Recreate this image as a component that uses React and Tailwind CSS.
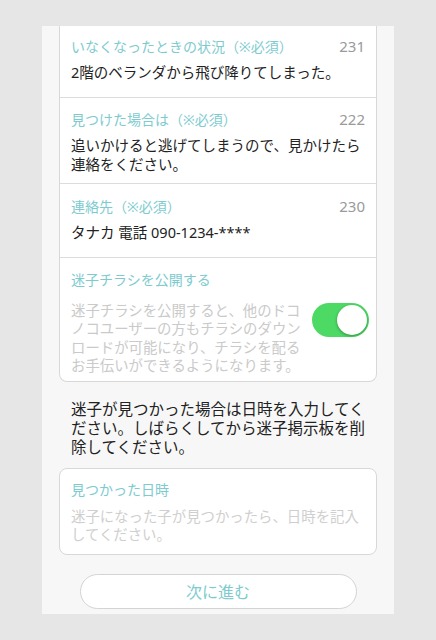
const font = { fontFamily: '"Noto Sans", "Noto Sans CJK JP", sans-serif' };

function Field({ label, count, children, className }) {
  return (
    <div className={className}>
      <div className="flex items-center justify-between h-5">
        <span className="text-[14px] text-[#7ecbcf]">{label}</span>
        <span className="text-[15px] text-[#9a9a9a]">{count}</span>
      </div>
      <div className="mt-[7px] text-[14.5px] leading-[19px] text-[#222]">{children}</div>
    </div>
  );
}

export default function App() {
  return (
    <div className="w-[436px] h-[640px] bg-[#e6e6e6] pt-[26px] overflow-hidden" style={font}>
      <div className="ml-[42px] w-[352px] h-[588px] bg-[#f7f7f7] px-[17px]">
        {/* form card, top row is scrolled off */}
        <div className="bg-white border-x border-b border-[#d8d8d8] rounded-b-lg">
          <Field label="いなくなったときの状況（※必須）" count="231" className="pt-[10px] pb-[15px] px-[11px] border-b border-[#dcdcdc]">
            2階のベランダから飛び降りてしまった。
          </Field>
          <Field label="見つけた場合は（※必須）" count="222" className="pt-[11px] pb-[9px] px-[11px] border-b border-[#dcdcdc]">
            追いかけると逃げてしまうので、見かけたら連絡をください。
          </Field>
          <Field label="連絡先（※必須）" count="230" className="pt-[12px] pb-[15px] px-[11px] border-b border-[#dcdcdc]">
            タナカ 電話 090-1234-****
          </Field>
          <div className="pt-[11px] pb-[6px] pl-[11px] pr-[7px]">
            <div className="h-5 text-[14px] text-[#7ecbcf]">迷子チラシを公開する</div>
            <div className="mt-[13px] flex items-start justify-between">
              <p className="w-[236px] text-[14.4px] leading-[18.3px] text-[#cacaca]">
                迷子チラシを公開すると、他のドコノコユーザーの方もチラシのダウンロードが可能になり、チラシを配るお手伝いができるようになります。
              </p>
              <div className="mt-[1px] w-[57px] h-[34px] rounded-full bg-[#4cd964] flex items-center justify-end pr-[2px]">
                <div className="w-[30px] h-[30px] rounded-full bg-white shadow-[0_1px_3px_rgba(0,0,0,0.35)]" />
              </div>
            </div>
          </div>
        </div>

        <p className="mt-[18px] px-[12px] w-[320px] text-[15.5px] leading-[19px] text-[#222]">
          迷子が見つかった場合は日時を入力してください。しばらくしてから迷子掲示板を削除してください。
        </p>

        <div className="mt-[11px] h-[87px] bg-white border border-[#d8d8d8] rounded-lg pt-[10px] px-[11px]">
          <div className="h-5 text-[14px] text-[#7ecbcf]">見つかった日時</div>
          <p className="mt-[9px] text-[14.4px] leading-[18px] text-[#cfcfcf]">
            迷子になった子が見つかったら、日時を記入してください。
          </p>
        </div>

        <div className="mt-[19px] flex justify-center">
          <button className="w-[277px] h-[35px] rounded-full bg-white border border-[#d4d4d4] text-[16px] text-[#7ecbcf]">
            次に進む
          </button>
        </div>
      </div>
    </div>
  );
}
